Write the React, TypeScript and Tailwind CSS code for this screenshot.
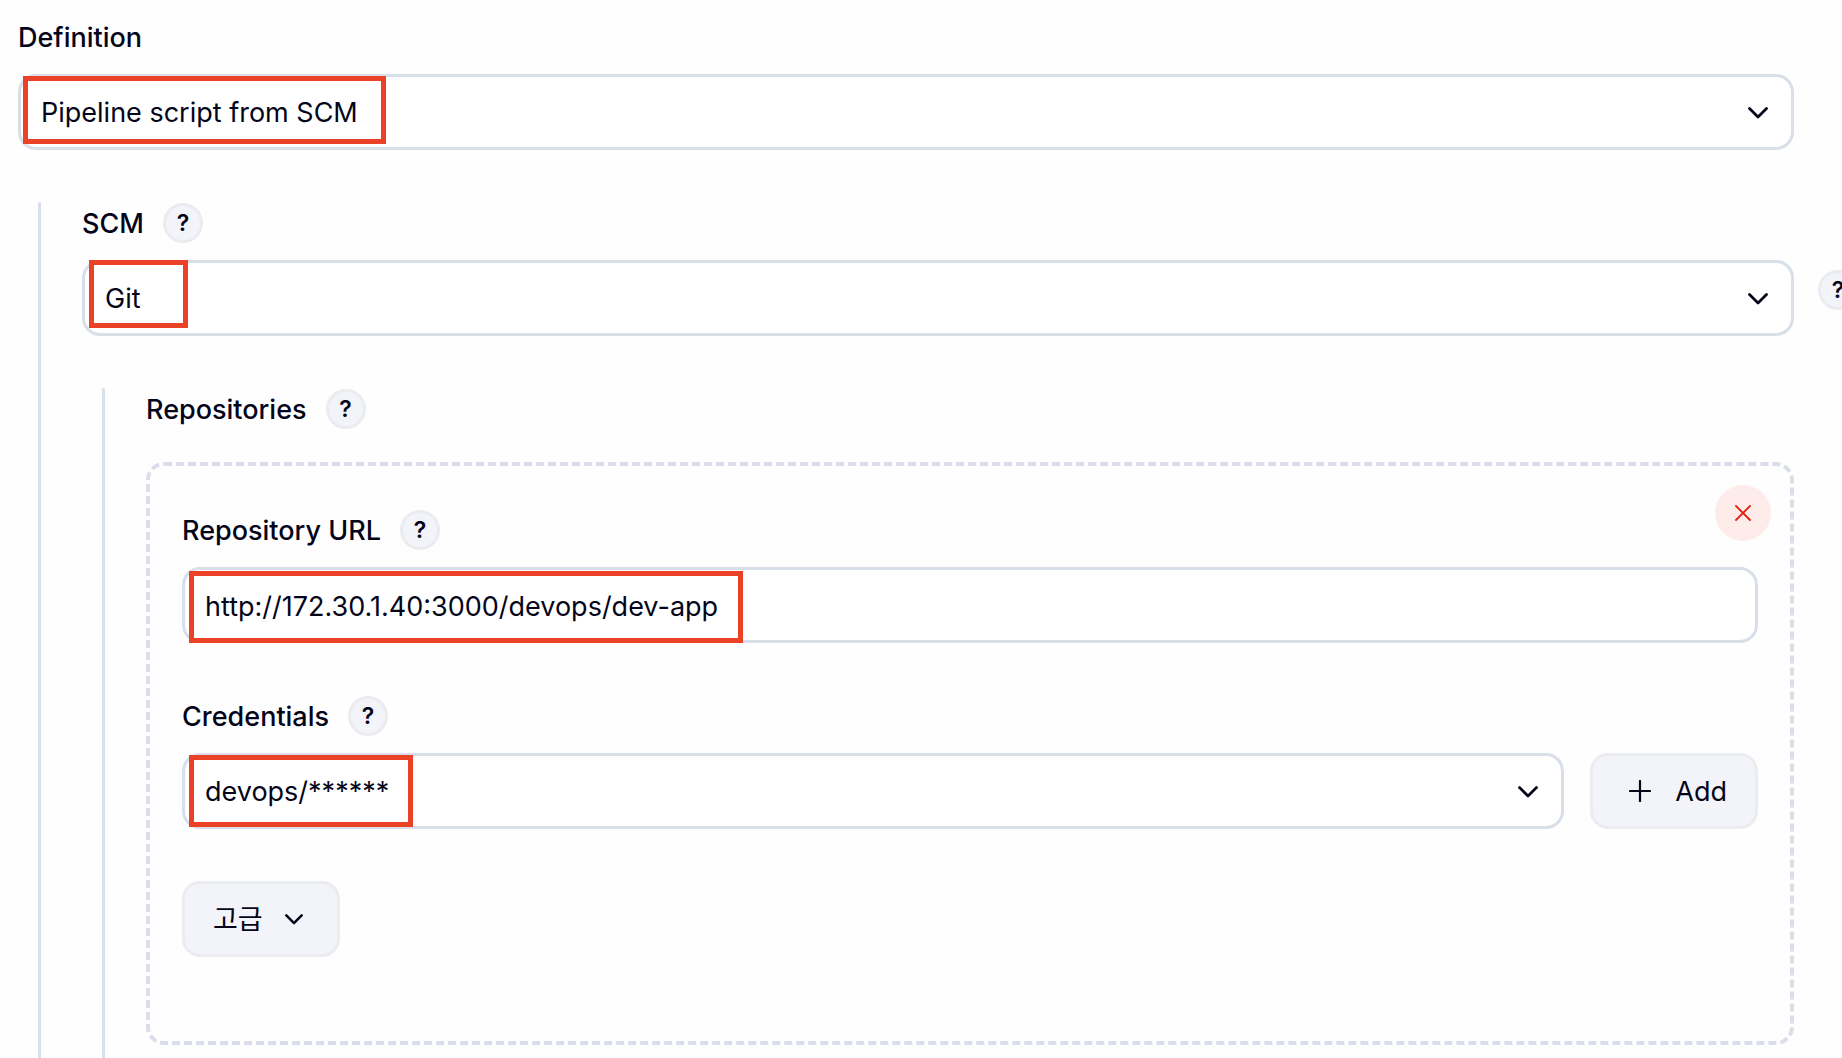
import type { ReactNode, SVGProps } from "react";
import clsx from "clsx";

const FIELD =
  "block h-[76px] w-full rounded-[18px] border-[3px] border-[#d9dfe9] bg-white px-5 pt-0.5 text-[27px] text-[#05051a] outline-none";

const BUTTON =
  "flex h-[76px] shrink-0 items-center rounded-[18px] border-[3px] border-[#ebecf0] bg-[#f3f4f9] text-[27px] text-[#05051a]";

function ChevronDown(props: SVGProps<SVGSVGElement>) {
  return (
    <svg
      viewBox="0 0 20 12"
      fill="none"
      stroke="currentColor"
      strokeWidth="2.8"
      strokeLinecap="round"
      strokeLinejoin="round"
      aria-hidden="true"
      {...props}
    >
      <path d="M1.5 1.5 10 10l8.5-8.5" />
    </svg>
  );
}

function HelpButton({ topic }: { topic: string }) {
  return (
    <button
      type="button"
      aria-label={`Help for ${topic}`}
      className="flex size-10 shrink-0 items-center justify-center rounded-full border-[3px] border-[#ebecf0] bg-[#f3f4f9] text-[23px] leading-none font-semibold"
    >
      ?
    </button>
  );
}

function LabelRow({
  htmlFor,
  children,
  help = true,
}: {
  htmlFor?: string;
  children: string;
  help?: boolean;
}) {
  return (
    <div className="flex h-[42px] items-center gap-[19px] text-[27px] font-medium">
      {htmlFor ? (
        <label htmlFor={htmlFor} className="pt-0.5">
          {children}
        </label>
      ) : (
        <h2 className="pt-0.5">{children}</h2>
      )}
      {help && <HelpButton topic={children} />}
    </div>
  );
}

function Highlight({ className }: { className: string }) {
  return (
    <div
      className={clsx(
        "pointer-events-none absolute border-[5px] border-[#eb4126]",
        className,
      )}
    />
  );
}

function SelectField({
  id,
  value,
  children,
}: {
  id: string;
  value: string;
  children?: ReactNode;
}) {
  return (
    <div className="relative flex-1">
      <select id={id} className={clsx(FIELD, "appearance-none")}>
        <option>{value}</option>
      </select>
      <ChevronDown className="pointer-events-none absolute top-[33px] right-[26px] h-3 w-5" />
      {children}
    </div>
  );
}

function Nested({ children }: { children: ReactNode }) {
  return (
    <section className="mt-[52px] ml-5 flex flex-1">
      <div className="w-[3px] shrink-0 rounded-t-full bg-[#d9dfe9]" />
      <div className="flex flex-1 flex-col pl-[41px]">{children}</div>
    </section>
  );
}

function Repository() {
  return (
    <div className="relative mt-8 rounded-[18px] border-4 border-dashed border-[#d9deea] px-8 pt-[43px] pb-[84px]">
      <button
        type="button"
        aria-label="Delete repository"
        className="absolute top-[19px] right-[19px] flex size-14 items-center justify-center rounded-full bg-[#fdecea] text-[#e6200f]"
      >
        <svg
          viewBox="0 0 16 16"
          className="size-4"
          fill="none"
          stroke="currentColor"
          strokeWidth="1.8"
          strokeLinecap="round"
          aria-hidden="true"
        >
          <path d="m1 1 14 14M15 1 1 15" />
        </svg>
      </button>

      <LabelRow htmlFor="repository-url">Repository URL</LabelRow>
      <div className="relative mt-4">
        <input
          id="repository-url"
          type="text"
          defaultValue="http://172.30.1.40:3000/devops/dev-app"
          className={FIELD}
        />
        <Highlight className="top-1 left-[7px] h-[72px] w-[554px]" />
      </div>

      <div className="mt-[52px]">
        <LabelRow htmlFor="credentials">Credentials</LabelRow>
        <div className="mt-4 flex gap-[26px]">
          <SelectField id="credentials" value="devops/******">
            <Highlight className="top-0.5 left-[7px] h-[72px] w-56" />
          </SelectField>
          <button type="button" className={clsx(BUTTON, "gap-6 pr-7 pl-9")}>
            <svg
              viewBox="0 0 22 22"
              className="size-[22px]"
              fill="none"
              stroke="currentColor"
              strokeWidth="2.2"
              strokeLinecap="round"
              aria-hidden="true"
            >
              <path d="M11 1v20M1 11h20" />
            </svg>
            <span className="pt-0.5">Add</span>
          </button>
        </div>
      </div>

      <button
        type="button"
        className={clsx(BUTTON, "mt-[52px] gap-[22px] pr-[34px] pl-7")}
      >
        <span className="pt-0.5">고급</span>
        <ChevronDown className="h-[11px] w-[18px]" />
      </button>
    </div>
  );
}

export default function App() {
  return (
    <main className="flex min-h-screen flex-col overflow-x-hidden bg-[#fefefe] pt-4 pr-12 pl-[18px] font-['Inter','Noto_Sans_CJK_KR',sans-serif] text-[#05051a]">
      <LabelRow htmlFor="definition" help={false}>
        Definition
      </LabelRow>
      <div className="mt-4 flex">
        <SelectField id="definition" value="Pipeline script from SCM">
          <Highlight className="top-0.5 left-[5px] h-[68px] w-[363px]" />
        </SelectField>
      </div>

      <Nested>
        <LabelRow htmlFor="scm">SCM</LabelRow>
        <div className="mt-4 flex">
          <SelectField id="scm" value="Git">
            <Highlight className="top-0 left-[7px] h-[68px] w-[99px]" />
            <div className="absolute top-2.5 left-full ml-6">
              <HelpButton topic="Git" />
            </div>
          </SelectField>
        </div>

        <Nested>
          <LabelRow>Repositories</LabelRow>
          <Repository />
          <div className="h-13" />
        </Nested>
      </Nested>
    </main>
  );
}
